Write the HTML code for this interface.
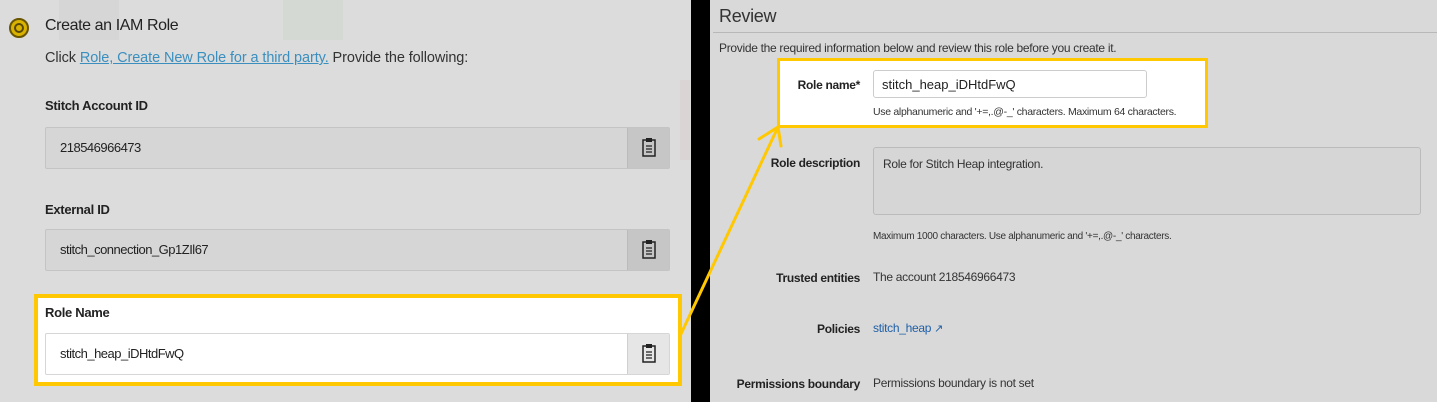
<!DOCTYPE html>
<html><head><meta charset="utf-8"><style>
*{margin:0;padding:0;box-sizing:border-box}
body{width:1437px;height:402px;overflow:hidden;position:relative;background:#dcdcdc;font-family:"Liberation Sans",sans-serif}
.a{position:absolute}
.lt{font-size:14px;color:#333}
.lbl{font-size:13px;font-weight:bold;color:#222;letter-spacing:-0.3px}
.inp{position:absolute;left:45px;width:625px;height:42px;border:1px solid #c4c4c4;background:#d6d6d6;border-radius:2px}
.inp span{position:absolute;left:14px;top:12px;font-size:13px;color:#222;letter-spacing:-0.5px}
.btn{position:absolute;right:0;top:0;width:42px;height:40px;background:#c6c6c6;border-left:1px solid #bbb}
.r{font-size:12px;color:#333;letter-spacing:-0.3px}
.rl{font-size:12px;font-weight:bold;color:#222;text-align:right;width:160px;letter-spacing:-0.3px}
</style></head><body>
<div class="a" style="left:59px;top:0;width:60px;height:40px;background:#d6d6d6"></div>
<div class="a" style="left:283px;top:0;width:60px;height:40px;background:#d4d9d4"></div>
<div class="a" style="left:680px;top:80px;width:10px;height:80px;background:#dbd4d4"></div>

<div class="a" style="left:9px;top:18px;width:20px;height:20px;border-radius:50%;background:#d9b300;border:2px solid #6a5500"></div>
<div class="a" style="left:14px;top:23px;width:10px;height:10px;border-radius:50%;border:2px solid #5a4800"></div>
<div class="a lt" style="left:45px;top:17px;font-size:16px;color:#222;letter-spacing:-0.4px">Create an IAM Role</div>
<div class="a lt" style="left:45px;top:50px;font-size:14.5px;letter-spacing:-0.1px">Click <span style="color:#3a8fbf;text-decoration:underline">Role, Create New Role for a third party.</span> Provide the following:</div>
<div class="a lbl" style="left:45px;top:98px">Stitch Account ID</div>
<div class="inp" style="top:127px"><span>218546966473</span><div class="btn"><svg width="42" height="40" viewBox="0 0 42 40"><rect x="15" y="12" width="12" height="16" fill="none" stroke="#222" stroke-width="1.5"/><rect x="18" y="10" width="6" height="4" fill="#222"/><path d="M18 18h6M18 21h6M18 24h6" stroke="#222" stroke-width="1.2"/></svg></div></div>
<div class="a lbl" style="left:45px;top:202px">External ID</div>
<div class="inp" style="top:229px"><span>stitch_connection_Gp1ZIl67</span><div class="btn"><svg width="42" height="40" viewBox="0 0 42 40"><rect x="15" y="12" width="12" height="16" fill="none" stroke="#222" stroke-width="1.5"/><rect x="18" y="10" width="6" height="4" fill="#222"/><path d="M18 18h6M18 21h6M18 24h6" stroke="#222" stroke-width="1.2"/></svg></div></div>

<div class="a" style="left:34px;top:294px;width:648px;height:92px;background:#fff;border:4px solid #ffc800"></div>
<div class="a lbl" style="left:45px;top:305px">Role Name</div>
<div class="inp" style="top:333px;background:#fff;border-color:#d6d6d6"><span>stitch_heap_iDHtdFwQ</span><div class="btn" style="background:#e6e6e6;border-left-color:#d0d0d0"><svg width="42" height="40" viewBox="0 0 42 40"><rect x="15" y="12" width="12" height="16" fill="none" stroke="#222" stroke-width="1.5"/><rect x="18" y="10" width="6" height="4" fill="#222"/><path d="M18 18h6M18 21h6M18 24h6" stroke="#222" stroke-width="1.2"/></svg></div></div>

<div class="a" style="left:691px;top:0;width:19px;height:402px;background:#000"></div>
<div class="a" style="left:710px;top:0;width:727px;height:402px;background:#d9d9d9"></div>

<div class="a" style="left:719px;top:6px;font-size:18px;color:#333;letter-spacing:-0.3px">Review</div>
<div class="a" style="left:713px;top:32px;width:724px;height:1px;background:#b8b8b8"></div>
<div class="a r" style="left:719px;top:41px">Provide the required information below and review this role before you create it.</div>

<div class="a" style="left:777px;top:58px;width:431px;height:70px;background:#fff;border:3px solid #ffc800"></div>
<div class="a rl" style="left:700px;top:78px">Role name*</div>
<div class="a" style="left:873px;top:70px;width:274px;height:28px;border:1px solid #ccc;border-radius:3px;background:#fff"></div>
<div class="a" style="left:882px;top:77px;font-size:13px;color:#222">stitch_heap_iDHtdFwQ</div>
<div class="a r" style="left:873px;top:106px;font-size:10.5px">Use alphanumeric and '+=,.@-_' characters. Maximum 64 characters.</div>

<div class="a rl" style="left:700px;top:156px">Role description</div>
<div class="a" style="left:873px;top:147px;width:548px;height:68px;border:1px solid #bbb;border-radius:3px;background:#d6d6d6"></div>
<div class="a r" style="left:883px;top:157px">Role for Stitch Heap integration.</div>
<div class="a r" style="left:873px;top:231px;font-size:10px">Maximum 1000 characters. Use alphanumeric and '+=,.@-_' characters.</div>
<div class="a rl" style="left:700px;top:271px">Trusted entities</div>
<div class="a r" style="left:873px;top:270px">The account 218546966473</div>
<div class="a rl" style="left:700px;top:322px">Policies</div>
<div class="a r" style="left:873px;top:321px;color:#1f5fa8">stitch_heap <span style="font-size:11px">&#x2197;&#xFE0E;</span></div>
<div class="a rl" style="left:700px;top:377px">Permissions boundary</div>
<div class="a r" style="left:873px;top:376px">Permissions boundary is not set</div>

<svg class="a" style="left:0;top:0" width="1437" height="402"><path d="M680 336 L778 127 M759 139 L778 127 L781 146" fill="none" stroke="#ffc800" stroke-width="3" stroke-linecap="round" stroke-linejoin="round"/></svg>
</body></html>
